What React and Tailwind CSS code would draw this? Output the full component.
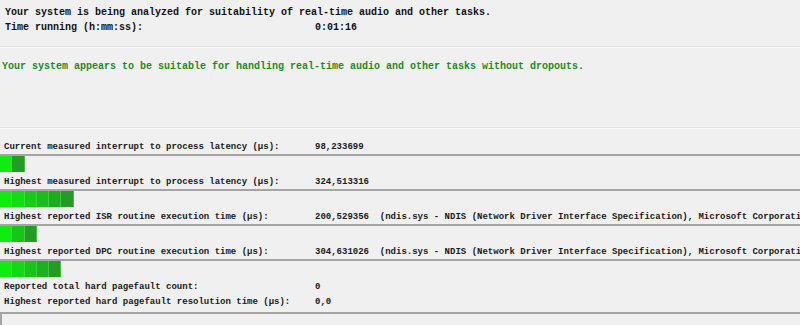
const rows = [
  { label: 'Current measured interrupt to process latency (µs):', value: '98,233699', blocks: 2 },
  { label: 'Highest measured interrupt to process latency (µs):', value: '324,513316', blocks: 6 },
  {
    label: 'Highest reported ISR routine execution time (µs):',
    value: '200,529356  (ndis.sys - NDIS (Network Driver Interface Specification), Microsoft Corporation)',
    blocks: 3,
  },
  {
    label: 'Highest reported DPC routine execution time (µs):',
    value: '304,631026  (ndis.sys - NDIS (Network Driver Interface Specification), Microsoft Corporation)',
    blocks: 5,
  },
];

function colorBloque(i, n) {
  const t = n > 1 ? i / (n - 1) : 0;
  const r = Math.round(16 + (34 - 16) * t);
  const g = Math.round(236 + (156 - 236) * t);
  const b = Math.round(16 + (34 - 16) * t);
  return `rgb(${r},${g},${b})`;
}

function Fila({ label, value }) {
  return (
    <div className="flex h-[15px] whitespace-nowrap pl-[4px] text-[9px] font-bold leading-[17px] text-[#1a1a1a]">
      <span className="w-[311px] shrink-0">{label}</span>
      <span className="whitespace-pre">{value}</span>
    </div>
  );
}

function Barra({ blocks }) {
  return (
    <div className="border-t-2 border-[#a4a4a4]">
      <div className="flex h-[16px]">
        {Array.from({ length: blocks }).map((_, i) => (
          <div
            key={i}
            className="h-full w-[12.3px] border-r border-[#5ad65a]/60"
            style={{ backgroundColor: colorBloque(i, blocks) }}
          />
        ))}
      </div>
    </div>
  );
}

export default function App() {
  return (
    <div className="h-[325px] w-[800px] overflow-hidden bg-[#f0f0f0] font-['Liberation_Mono','Courier_New',monospace]">
      <div className="h-[46px] px-[5px] pt-[5px] text-[10px] font-bold leading-[15px] text-[#111]">
        <div className="whitespace-nowrap">Your system is being analyzed for suitability of real-time audio and other tasks.</div>
        <div className="flex whitespace-nowrap">
          <span className="w-[310px]">Time running (h:mm:ss):</span>
          <span>0:01:16</span>
        </div>
      </div>
      <div className="border-t border-b border-t-[#e2e2e2] border-b-[#f8f8f8]" />

      <div className="h-[79px] px-[2px] pt-[11px] text-[10px] font-bold leading-[15px] text-[#1f8a1f]">
        Your system appears to be suitable for handling real-time audio and other tasks without dropouts.
      </div>
      <div className="border-t border-b border-t-[#e2e2e2] border-b-[#f8f8f8]" />

      <div className="pt-[10px]">
        {rows.map((r) => (
          <div key={r.label} className="pb-[2px]">
            <Fila label={r.label} value={r.value} />
            <Barra blocks={r.blocks} />
          </div>
        ))}
        <Fila label="Reported total hard pagefault count:" value="0" />
        <Fila label="Highest reported hard pagefault resolution time (µs):" value="0,0" />
        <div className="mt-[3px] h-[20px] border-l-2 border-t-2 border-[#a4a4a4]" />
      </div>
    </div>
  );
}
